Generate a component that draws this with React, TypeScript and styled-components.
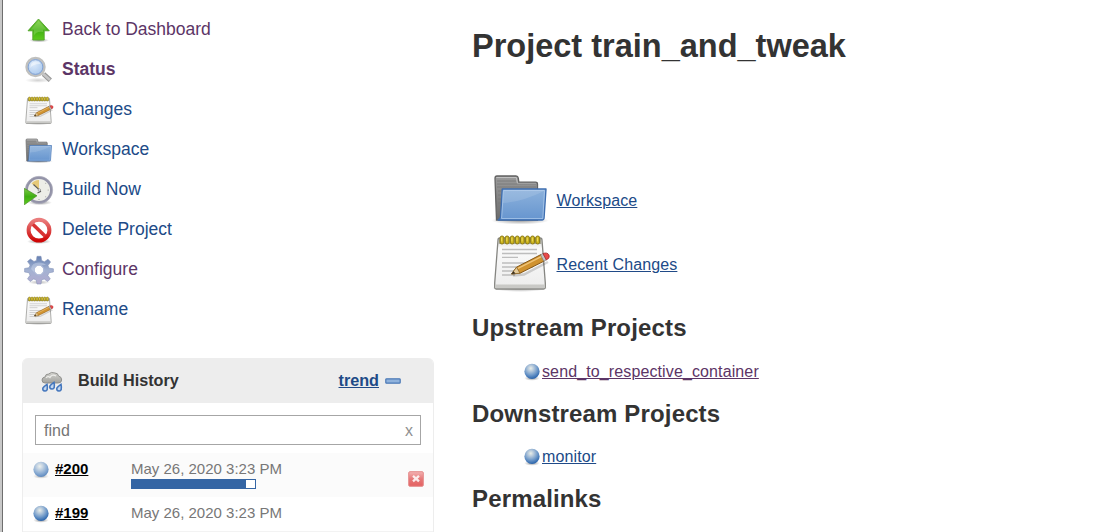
import React from "react";
import styled, { createGlobalStyle } from "styled-components";

const Global = createGlobalStyle`
  * { box-sizing: border-box; }
  html, body { margin: 0; background: #fff; overflow: hidden; }
  body { font-family: "Liberation Sans", Arial, Helvetica, sans-serif; color: #333; font-size: 16px; }
  svg { display: block; flex: none; }
`;

const NAVY = "#204a87";
const PLUM = "#5c3566";

const Page = styled.div`
  display: flex;
  width: 1095px;
  height: 532px;
  overflow: hidden;
  background: #fff;
  border-left: 2px solid #c8c8c8;
`;

const Side = styled.aside`
  width: 432px;
  flex: none;
  padding: 15px 0 0 19px;
  border-left: 1px solid #6e6e6e;
`;

const Tasks = styled.nav`
  display: flex;
  flex-direction: column;
  padding-left: 2px;
  height: 343px;
`;

const Task = styled.a<{ $visited?: boolean; $active?: boolean }>`
  display: flex;
  gap: 8px;
  height: 40px;
  color: ${(p) => (p.$visited ? PLUM : NAVY)};
  font-size: 17.5px;
  font-weight: ${(p) => (p.$active ? 700 : 400)};
  line-height: 28px;
  text-decoration: none;
  white-space: nowrap;
`;

const Panel = styled.section`
  width: 412px;
  border: 1px solid #ededed;
  border-top: 0;
  border-radius: 6px 6px 0 0;
  overflow: hidden;
`;

const PanelHead = styled.header`
  display: flex;
  align-items: center;
  height: 45px;
  padding: 0 32px 0 17px;
  background: #ededed;
  font-weight: 700;
  font-size: 16.2px;
`;

const PanelTitle = styled.span`
  flex: 1;
  padding-left: 14px;
`;

const Trend = styled.a`
  color: ${NAVY};
  text-decoration: underline;
  margin-right: 6px;
`;

const Search = styled.div`
  display: flex;
  align-items: center;
  justify-content: space-between;
  height: 30px;
  margin: 12px 12px 8px;
  padding: 2px 7px 0 8px;
  border: 1px solid #a6a6a6;
  color: #767676;
`;

const Clear = styled.span`
  color: #909090;
`;

const Build = styled.div<{ $shade?: boolean; $height: number }>`
  display: flex;
  height: ${(p) => p.$height}px;
  padding: 7px 9px 0 10px;
  background: ${(p) => (p.$shade ? "#fbfbfb" : "#fff")};
  border-bottom: ${(p) => (p.$shade ? 0 : 1)}px solid #f3f3f3;
  font-size: 15px;
  line-height: 17px;
`;

const BuildNo = styled.a`
  width: 82px;
  padding-left: 6px;
  color: #000;
  font-weight: 700;
  text-decoration: underline;
`;

const BuildInfo = styled.div`
  flex: 1;
  color: #777;
`;

const Progress = styled.div`
  width: 125px;
  height: 10px;
  margin-top: 2px;
  border: 1px solid #3465a4;
  background: #fff;
`;

const Done = styled.div`
  width: 114px;
  height: 8px;
  background: #3465a4;
`;

const BallSlot = styled.div`
  padding-top: 1px;
`;

const Stop = styled.div`
  padding-top: 11px;
`;

const Main = styled.main`
  flex: 1;
  padding: 27px 0 0 38px;
`;

const Title = styled.h1`
  margin: 0;
  height: 139px;
  font-size: 32.5px;
  line-height: 38px;
`;

const Shortcuts = styled.div`
  padding: 0 0 8px 19px;
`;

const Shortcut = styled.div`
  display: flex;
  align-items: center;
  gap: 5.5px;
  height: 64px;
`;

const Link = styled.a<{ $visited?: boolean }>`
  color: ${(p) => (p.$visited ? PLUM : NAVY)};
  font-size: 16px;
  letter-spacing: 0.12px;
  line-height: 18px;
  text-decoration: underline;

  ${Shortcut} & {
    margin-top: 6px;
  }
`;

const Heading = styled.h2`
  margin: 0;
  font-size: 24px;
  line-height: 28px;
  letter-spacing: 0.15px;
`;

const Group = styled.section<{ $tight?: boolean }>`
  display: flex;
  flex-direction: column;
  gap: ${(p) => (p.$tight ? 20 : 21)}px;
  height: ${(p) => (p.$tight ? 85 : 86)}px;
  padding-top: 12px;
`;

const Job = styled.div`
  display: flex;
  gap: 2px;
  padding-left: 52px;
`;

function Defs() {
  return (
    <svg width="0" height="0" style={{ position: "absolute" }}>
      <defs>
        <linearGradient id="green" x1="0" y1="0" x2="0" y2="1">
          <stop offset="0" stopColor="#7ccb45" /><stop offset="0.5" stopColor="#3fae12" /><stop offset="1" stopColor="#5ccb1c" />
        </linearGradient>
        <linearGradient id="folder" x1="0" y1="0" x2="0" y2="1">
          <stop offset="0" stopColor="#8db2dc" /><stop offset="1" stopColor="#6695cf" />
        </linearGradient>
        <linearGradient id="folderBack" x1="0" y1="0" x2="0" y2="1">
          <stop offset="0" stopColor="#9b9b9b" /><stop offset="1" stopColor="#6b6b6b" />
        </linearGradient>
        <linearGradient id="paper" x1="0" y1="0" x2="0" y2="1">
          <stop offset="0" stopColor="#d6d6d2" /><stop offset="0.2" stopColor="#fafafa" /><stop offset="1" stopColor="#ececec" />
        </linearGradient>
        <linearGradient id="gear" x1="0" y1="0" x2="0" y2="1">
          <stop offset="0" stopColor="#6580b2" /><stop offset="0.5" stopColor="#a3b2d2" /><stop offset="1" stopColor="#b3abd0" />
        </linearGradient>
        <linearGradient id="red" x1="0" y1="0" x2="0" y2="1">
          <stop offset="0" stopColor="#ea7d7d" /><stop offset="0.45" stopColor="#dd4b4b" /><stop offset="1" stopColor="#cf0606" />
        </linearGradient>
        <linearGradient id="stop" x1="0" y1="0" x2="0" y2="1">
          <stop offset="0" stopColor="#f3b3b3" /><stop offset="0.5" stopColor="#e67878" /><stop offset="1" stopColor="#e46060" />
        </linearGradient>
        <linearGradient id="cloud" x1="0" y1="0" x2="0" y2="1">
          <stop offset="0" stopColor="#d2d2ce" /><stop offset="1" stopColor="#a2a29e" />
        </linearGradient>
        <radialGradient id="ball" cx="0.42" cy="0.3" r="0.68">
          <stop offset="0" stopColor="#e9eee8" /><stop offset="0.25" stopColor="#bccddd" /><stop offset="0.65" stopColor="#6f99c9" /><stop offset="1" stopColor="#2f68ae" />
        </radialGradient>
        <radialGradient id="lens" cx="0.4" cy="0.35" r="0.7">
          <stop offset="0" stopColor="#dceafa" /><stop offset="1" stopColor="#a5c5ec" />
        </radialGradient>
        <radialGradient id="shade">
          <stop offset="0" stopColor="#000" stopOpacity="0.4" /><stop offset="1" stopColor="#000" stopOpacity="0" />
        </radialGradient>
      </defs>
    </svg>
  );
}

const UpIcon = () => (
  <svg width="30" height="30" viewBox="0 0 30 30">
    <ellipse cx="15" cy="25.3" rx="10" ry="2.2" fill="url(#shade)" />
    <path d="M14.5 4 L25.3 15.8 H20.2 V25 H8.8 V15.8 H4 Z" fill="url(#green)" stroke="#54a52b" strokeWidth="0.9" strokeLinejoin="round" />
    <path d="M14.5 5.7 L22.8 14.8 H19.2 V17 Q12 16 9.8 21 V14.8 H6.3 Z" fill="#c4ef9e" opacity="0.28" />
  </svg>
);

const SearchIcon = () => (
  <svg width="30" height="30" viewBox="0 0 30 30">
    <ellipse cx="14" cy="25.3" rx="13" ry="2.6" fill="url(#shade)" opacity="0.45" />
    <path d="M19.5 19 L26.3 25.3" stroke="#959595" strokeWidth="4.8" />
    <path d="M18.5 18.2 L26 25" stroke="#c6c6c6" strokeWidth="2.6" />
    <circle cx="11.5" cy="12" r="9" fill="url(#lens)" stroke="#c0c0be" strokeWidth="2.4" />
    <circle cx="11.5" cy="12" r="7.4" fill="none" stroke="#7f9fd0" strokeWidth="1" />
    <path d="M6.3 13 Q6 6.8 12 6.2 Q16 6.4 16.3 9 Q9 9 6.3 13Z" fill="#fff" opacity="0.45" />
  </svg>
);

const NotepadIcon = ({ size }: { size: number }) => (
  <svg width={size} height={size} viewBox="0 0 60 60">
    <ellipse cx="29" cy="56" rx="28" ry="4" fill="url(#shade)" />
    <path d="M7 8 Q7 6 9 6 H49 Q51 6 51 8 L54.3 51 V55.5 Q54.3 57 52.5 57 H5.2 Q3.7 57 3.7 55.5 V51 Z" fill="url(#paper)" stroke="#858581" strokeWidth="1.3" />
    <path d="M4.5 52.5 H53.5 V56 H4.5Z" fill="#c9c9c6" />
    <path d="M8 7 H50 L50.5 12 H7.5Z" fill="#a8a798" />
    {[11, 16.1, 21.2, 26.3, 31.4, 36.5, 41.6, 46.7].map((x) => (
      <g key={x}>
        <rect x={x - 1.9} y="4" width="3.8" height="8" rx="1.8" fill="#cbb31b" stroke="#85740f" strokeWidth="0.9" />
        <path d={`M${x - 0.3} 5.5v4`} stroke="#f4e36a" strokeWidth="0.9" />
      </g>
    ))}
    <path d="M11 17.5H46M11 21.5H46M11 25.3H27M11 31H45M11 35H42M11 39H32M11 43H24" stroke="#bdbdbd" strokeWidth="1.3" />
    <path d="M22 43.5 L33 42.5 L57 30" stroke="#000" strokeWidth="2.5" opacity="0.16" fill="none" />
    <path d="M20.5 42 L25.5 35.2 L50 22.5 L53.3 29 L29 41.2 Z" fill="#d0922f" stroke="#86591a" strokeWidth="1" strokeLinejoin="round" />
    <path d="M20.5 42 L25.5 35.2 L29 41.2Z" fill="#e5cb9a" stroke="#8a682f" strokeWidth="0.8" />
    <path d="M20.5 42 L22.6 39.2 L24.4 41.6Z" fill="#322b20" />
    <path d="M27 36.4 L50.8 24.3" stroke="#f0c477" strokeWidth="1.3" />
    <path d="M49.5 22.8 L52 21.5 L55.4 28 L52.8 29.3Z" fill="#c3c4c2" stroke="#777" strokeWidth="0.6" />
    <path d="M52 21.5 Q56.5 20 58 23 Q59.4 26 55.4 28Z" fill="#ea4a4a" stroke="#a52c2c" strokeWidth="0.8" />
  </svg>
);

const FolderIcon = ({ size }: { size: number }) => (
  <svg width={size} height={size} viewBox="0 -3 60 60">
    <ellipse cx="29" cy="49.5" rx="29" ry="4" fill="url(#shade)" />
    <path d="M5.5 49 L4 7.5 Q4 5 6 5 H25 Q27 5 27.3 7 L27.8 11.2 H44.5 Q46.5 11.2 46.5 13 V49 Z" fill="url(#folderBack)" stroke="#636363" strokeWidth="1.3" />
    <path d="M5.3 6.5 H25.3 L26.5 12.6 H45" fill="none" stroke="#c0c0c0" strokeWidth="1" />
    <path d="M6 10H25M6 13H45M6 16H45M7 20H10M7 24H10M7 28H10M7 32H10" stroke="#777" strokeWidth="0.8" />
    <path d="M11.2 18 H55 L53 47.5 Q52.8 49 51.3 49 H7.2 Q9.3 48 9.6 45.5 Z" fill="url(#folder)" stroke="#3e6eb0" strokeWidth="1.4" strokeLinejoin="round" />
    <path d="M12.5 19.4 H53.5 L51.8 47.5 H10.6 Z" fill="none" stroke="#b0cbec" strokeWidth="0.9" opacity="0.8" />
    <path d="M12 32 Q31 31 53 20 V19 H13Z" fill="#fff" opacity="0.12" />
  </svg>
);

const ClockIcon = () => (
  <svg width="30" height="30" viewBox="0 0 30 30">
    <ellipse cx="16" cy="27.6" rx="12" ry="2.6" fill="url(#shade)" />
    <circle cx="15" cy="15" r="12.4" fill="#edeee8" stroke="#9393a8" strokeWidth="2.7" />
    <circle cx="15" cy="15" r="13.7" fill="none" stroke="#b2b2c0" strokeWidth="0.6" />
    <path d="M15 14.5 L7.5 8.5 Q10.5 4.8 15 5Z" fill="#e6c978" />
    <path d="M9.5 9.5 L15 14.5 L16.5 16.5 L13.5 18" stroke="#5a5a5a" strokeWidth="1.1" fill="none" />
    <circle cx="15.3" cy="15" r="1.2" fill="#fff" stroke="#666" strokeWidth="0.6" />
    <g fill="#999"><circle cx="15" cy="24.5" r="0.6" /><circle cx="24.2" cy="15" r="0.6" /><circle cx="21.7" cy="21.7" r="0.5" /><circle cx="21.7" cy="8.3" r="0.5" /></g>
    <path d="M0.3 13.3 L13 20.8 L0.3 29.8Z" fill="url(#green)" stroke="#498f25" strokeWidth="0.7" />
  </svg>
);

const DeleteIcon = () => (
  <svg width="30" height="30" viewBox="0 0 30 30">
    <ellipse cx="15" cy="26.5" rx="12" ry="2.5" fill="url(#shade)" />
    <circle cx="15" cy="15.2" r="10.4" fill="#fff" />
    <path d="M8 8.5 L22 22" stroke="#d93434" strokeWidth="3.6" />
    <circle cx="15" cy="15.2" r="10.4" fill="none" stroke="url(#red)" strokeWidth="4" />
  </svg>
);

const GearIcon = () => (
  <svg width="30" height="30" viewBox="0 0 30 30">
    <ellipse cx="15" cy="27.3" rx="11" ry="2.2" fill="url(#shade)" opacity="0.7" />
    <path
      fill="url(#gear)"
      fillRule="evenodd"
      stroke="#8796bb"
      strokeWidth="0.6"
      d="M13 1.3H17L17.7 5.6L20.4 6.8L24 4.2L26.6 7L24 10.5L25 13.2L29.4 13.8V17L25 17.8L23.8 20.4L26.3 24L23.6 26.5L20.2 24L17.5 25L17 29H13L12.3 25L9.7 24L6.2 26.5L3.5 23.8L6 20.3L5 17.7L.6 17V13.5L5 12.7L6.1 10.1L3.5 6.5L6.4 4L10 6.5L12.4 5.5ZM15 10.7a4.4 4.4 0 1 0 .01 0Z"
    />
    <path d="M7 14 Q8 7.5 15 7.6 Q20 7.7 22 10 Q14 9 10 17Z" fill="#e3eaf8" opacity="0.35" />
    <circle cx="15" cy="15" r="4.2" fill="#fff" />
    <circle cx="15" cy="15" r="4.9" fill="none" stroke="#b4c0dc" strokeWidth="0.9" />
  </svg>
);

const RainIcon = () => (
  <svg width="24" height="24" viewBox="0 0 24 24">
    <path d="M5 14 Q2 14 2 11 Q2 8.5 5.2 7.8 Q5.3 4.9 8.7 5 Q11 2.4 15 4 Q18 4 18.5 7 Q21.8 7.8 21.7 11 Q21.6 14 18 14Z" fill="url(#cloud)" stroke="#8b8b88" strokeWidth="0.9" />
    <path d="M6 9 Q8 6.5 10 8.5 Q12 4.8 16 7" stroke="#ededea" strokeWidth="1.2" fill="none" />
    {[[5, 19.6], [12, 17.6], [19, 19.6]].map(([x, y]) => (
      <path key={x} d={`M${x + 2} ${y - 4.3} Q${x + 3.4} ${y + 2.6} ${x} ${y + 2.4} Q${x - 3} ${y + 2} ${x - 2} ${y - 0.7} Q${x - 1} ${y - 2.2} ${x + 2} ${y - 4.3}Z`} fill="#c3d7f0" stroke="#4577bd" strokeWidth="1.6" />
    ))}
  </svg>
);

const BallIcon = ({ faded }: { faded?: boolean }) => (
  <svg width="16" height="18" viewBox="0 0 16 18" opacity={faded ? 0.75 : 1}>
    <ellipse cx="8" cy="15.3" rx="7.8" ry="2.5" fill="url(#shade)" />
    <circle cx="8" cy="8.4" r="7.6" fill="url(#ball)" />
  </svg>
);

const MinusIcon = () => (
  <svg width="16" height="6" viewBox="0 0 16 6">
    <rect x="0.8" y="0.8" width="14.4" height="4.4" rx="0.8" fill="#8fb2dc" stroke="#4a78b5" strokeWidth="1.2" />
  </svg>
);

const StopIcon = () => (
  <svg width="16" height="16" viewBox="0 0 16 16">
    <rect x="0.7" y="0.7" width="14.6" height="14.6" rx="1.2" fill="url(#stop)" stroke="#e58a8a" strokeWidth="1" />
    <path d="M5 4.8 L11 10.4 M11 4.8 L5 10.4" stroke="#fff" strokeWidth="2.3" opacity="0.85" />
  </svg>
);

export default function App() {
  return (
    <Page>
      <Global />
      <Defs />
      <Side>
        <Tasks>
          <Task $visited><UpIcon />Back to Dashboard</Task>
          <Task $visited $active><SearchIcon />Status</Task>
          <Task><NotepadIcon size={30} />Changes</Task>
          <Task><FolderIcon size={30} />Workspace</Task>
          <Task><ClockIcon />Build Now</Task>
          <Task><DeleteIcon />Delete Project</Task>
          <Task $visited><GearIcon />Configure</Task>
          <Task><NotepadIcon size={30} />Rename</Task>
        </Tasks>
        <Panel>
          <PanelHead>
            <RainIcon />
            <PanelTitle>Build History</PanelTitle>
            <Trend>trend</Trend>
            <MinusIcon />
          </PanelHead>
          <Search>
            <span>find</span>
            <Clear>x</Clear>
          </Search>
          <Build $shade $height={44}>
            <BallSlot><BallIcon faded /></BallSlot>
            <BuildNo>#200</BuildNo>
            <BuildInfo>
              May 26, 2020 3:23 PM
              <Progress><Done /></Progress>
            </BuildInfo>
            <Stop><StopIcon /></Stop>
          </Build>
          <Build $height={35}>
            <BallSlot><BallIcon /></BallSlot>
            <BuildNo>#199</BuildNo>
            <BuildInfo>May 26, 2020 3:23 PM</BuildInfo>
          </Build>
        </Panel>
      </Side>
      <Main>
        <Title>Project train_and_tweak</Title>
        <Shortcuts>
          <Shortcut><FolderIcon size={60} /><Link>Workspace</Link></Shortcut>
          <Shortcut><NotepadIcon size={60} /><Link>Recent Changes</Link></Shortcut>
        </Shortcuts>
        <Group>
          <Heading>Upstream Projects</Heading>
          <Job><BallIcon /><Link $visited>send_to_respective_container</Link></Job>
        </Group>
        <Group $tight>
          <Heading>Downstream Projects</Heading>
          <Job><BallIcon /><Link>monitor</Link></Job>
        </Group>
        <Group><Heading>Permalinks</Heading></Group>
      </Main>
    </Page>
  );
}
